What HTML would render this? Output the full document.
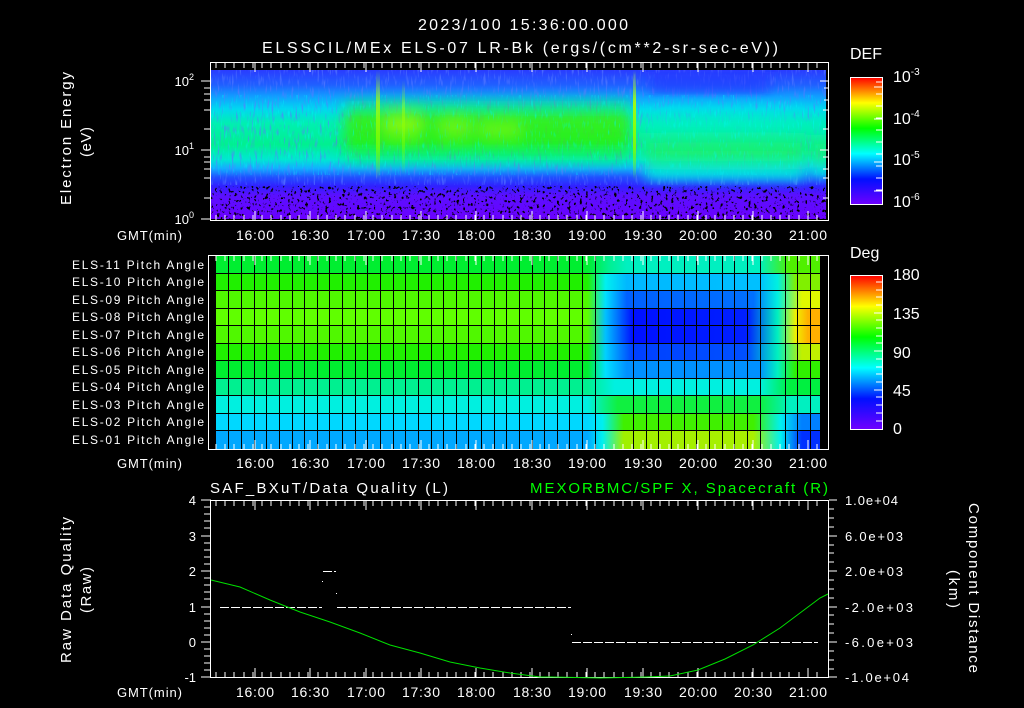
<!DOCTYPE html>
<html><head><meta charset="utf-8"><style>
html,body{margin:0;padding:0;background:#000;}
svg{display:block;}
text{font-family:"Liberation Sans",sans-serif;fill:#fff;}
</style></head><body>
<svg width="1024" height="708" viewBox="0 0 1024 708" xmlns="http://www.w3.org/2000/svg">
<defs>
<linearGradient id="rb" x1="0" y1="1" x2="0" y2="0">
<stop offset="0" stop-color="#7000ff"/><stop offset="0.2" stop-color="#0010ff"/><stop offset="0.4" stop-color="#00ffff"/><stop offset="0.6" stop-color="#00ff00"/><stop offset="0.8" stop-color="#ffff00"/><stop offset="1" stop-color="#ff0000"/>
</linearGradient>
<linearGradient id="sp" x1="0" y1="0" x2="0" y2="1">
<stop offset="0" stop-color="#2a3cff"/><stop offset="0.1" stop-color="#2060ff"/><stop offset="0.18" stop-color="#10a0ff"/><stop offset="0.26" stop-color="#00d8f0"/><stop offset="0.36" stop-color="#00f0b0"/><stop offset="0.5" stop-color="#00f090"/><stop offset="0.6" stop-color="#00e8d0"/><stop offset="0.66" stop-color="#10b0ff"/><stop offset="0.72" stop-color="#2050ff"/><stop offset="0.78" stop-color="#3020ff"/><stop offset="0.84" stop-color="#5a10ff"/><stop offset="1" stop-color="#6a00ff"/>
</linearGradient>
<linearGradient id="gb" x1="0" y1="0" x2="0" y2="1">
<stop offset="0" stop-color="#00ff40" stop-opacity="0"/><stop offset="0.35" stop-color="#40f000" stop-opacity="0.8"/><stop offset="0.6" stop-color="#30f000" stop-opacity="0.8"/><stop offset="1" stop-color="#00ff40" stop-opacity="0"/>
</linearGradient>
<linearGradient id="yb" x1="0" y1="0" x2="0" y2="1">
<stop offset="0" stop-color="#a0ff00" stop-opacity="0"/><stop offset="0.5" stop-color="#c8ff00" stop-opacity="0.9"/><stop offset="1" stop-color="#a0ff00" stop-opacity="0"/>
</linearGradient>
<linearGradient id="lb" x1="0" y1="0" x2="0" y2="1">
<stop offset="0" stop-color="#00e0f0" stop-opacity="0"/><stop offset="0.3" stop-color="#00f0c0" stop-opacity="0.9"/><stop offset="0.6" stop-color="#20f060" stop-opacity="0.8"/><stop offset="0.85" stop-color="#00f0e0" stop-opacity="0.8"/><stop offset="1" stop-color="#00e0f0" stop-opacity="0"/>
</linearGradient>
<linearGradient id="spk1" x1="0" y1="0" x2="0" y2="1">
<stop offset="0" stop-color="#b0ff00" stop-opacity="0"/><stop offset="0.3" stop-color="#b0ff00" stop-opacity="0.9"/><stop offset="0.7" stop-color="#80ff00" stop-opacity="0.9"/><stop offset="1" stop-color="#80ff00" stop-opacity="0"/>
</linearGradient>
<filter id="bl" x="-10%" y="-20%" width="120%" height="140%"><feGaussianBlur stdDeviation="7 3"/></filter>
<filter id="spk" x="0" y="0" width="100%" height="100%">
<feTurbulence type="fractalNoise" baseFrequency="0.35 0.3" numOctaves="2" seed="4"/>
<feColorMatrix type="matrix" values="0 0 0 0 0  0 0 0 0 0  0 0 0 0 0  10 0 0 0 -6"/>
</filter>
<filter id="tex" x="0" y="0" width="100%" height="100%">
<feTurbulence type="fractalNoise" baseFrequency="0.5 0.08" numOctaves="2" seed="7"/>
<feColorMatrix type="matrix" values="0 0 0 0 0.1  0 0 0 0 0.2  0 0 0 0 1  4 0 0 0 -2.2"/>
</filter>
<filter id="tex2" x="0" y="0" width="100%" height="100%">
<feTurbulence type="fractalNoise" baseFrequency="0.6 0.1" numOctaves="2" seed="11"/>
<feColorMatrix type="matrix" values="0 0 0 0 0  0 0 0 0 0.95  0 0 0 0 0.95  4 0 0 0 -2.4"/>
</filter>
<linearGradient id="r0" x1="216" x2="820" gradientUnits="userSpaceOnUse"><stop offset="0.615" stop-color="#00ee30"/><stop offset="0.65" stop-color="#00f090"/><stop offset="0.68" stop-color="#00f0c0"/><stop offset="0.9" stop-color="#00f0c0"/><stop offset="0.95" stop-color="#50f000"/></linearGradient>
<linearGradient id="r1" x1="216" x2="820" gradientUnits="userSpaceOnUse"><stop offset="0.615" stop-color="#20f000"/><stop offset="0.645" stop-color="#00f0f0"/><stop offset="0.68" stop-color="#00b8ff"/><stop offset="0.9" stop-color="#00c0ff"/><stop offset="0.93" stop-color="#00f0e0"/><stop offset="0.96" stop-color="#80f000"/></linearGradient>
<linearGradient id="r2" x1="216" x2="820" gradientUnits="userSpaceOnUse"><stop offset="0.615" stop-color="#50f800"/><stop offset="0.645" stop-color="#00e0ff"/><stop offset="0.68" stop-color="#0060ff"/><stop offset="0.89" stop-color="#0070ff"/><stop offset="0.93" stop-color="#00f0e0"/><stop offset="0.97" stop-color="#e0f800"/></linearGradient>
<linearGradient id="r3" x1="216" x2="820" gradientUnits="userSpaceOnUse"><stop offset="0.615" stop-color="#60ff00"/><stop offset="0.645" stop-color="#00c0ff"/><stop offset="0.69" stop-color="#0010ff"/><stop offset="0.88" stop-color="#0020ff"/><stop offset="0.93" stop-color="#00f0c0"/><stop offset="0.96" stop-color="#f0f000"/><stop offset="0.98" stop-color="#ffb000"/></linearGradient>
<linearGradient id="r4" x1="216" x2="820" gradientUnits="userSpaceOnUse"><stop offset="0.615" stop-color="#50f800"/><stop offset="0.645" stop-color="#00c0ff"/><stop offset="0.69" stop-color="#0010ff"/><stop offset="0.88" stop-color="#0020ff"/><stop offset="0.93" stop-color="#00f0c0"/><stop offset="0.96" stop-color="#f0f000"/><stop offset="0.98" stop-color="#ffb000"/></linearGradient>
<linearGradient id="r5" x1="216" x2="820" gradientUnits="userSpaceOnUse"><stop offset="0.615" stop-color="#20f000"/><stop offset="0.645" stop-color="#00d0ff"/><stop offset="0.69" stop-color="#0040ff"/><stop offset="0.88" stop-color="#0050ff"/><stop offset="0.93" stop-color="#00f0c0"/><stop offset="0.97" stop-color="#c0f000"/></linearGradient>
<linearGradient id="r6" x1="216" x2="820" gradientUnits="userSpaceOnUse"><stop offset="0.615" stop-color="#00ee30"/><stop offset="0.645" stop-color="#00e0ff"/><stop offset="0.68" stop-color="#0090ff"/><stop offset="0.9" stop-color="#0090ff"/><stop offset="0.93" stop-color="#00f0c0"/><stop offset="0.96" stop-color="#30f000"/></linearGradient>
<linearGradient id="r7" x1="216" x2="820" gradientUnits="userSpaceOnUse"><stop offset="0.615" stop-color="#00f090"/><stop offset="0.66" stop-color="#00f0e0"/><stop offset="0.9" stop-color="#00f0e0"/><stop offset="0.95" stop-color="#00f040"/></linearGradient>
<linearGradient id="r8" x1="216" x2="820" gradientUnits="userSpaceOnUse"><stop offset="0.615" stop-color="#00f0e0"/><stop offset="0.665" stop-color="#10f040"/><stop offset="0.9" stop-color="#10f040"/><stop offset="0.95" stop-color="#00f0c0"/></linearGradient>
<linearGradient id="r9" x1="216" x2="820" gradientUnits="userSpaceOnUse"><stop offset="0.615" stop-color="#00d8ff"/><stop offset="0.64" stop-color="#00f0f0"/><stop offset="0.675" stop-color="#40f000"/><stop offset="0.89" stop-color="#40f000"/><stop offset="0.935" stop-color="#00f0f0"/><stop offset="0.97" stop-color="#0080ff"/></linearGradient>
<linearGradient id="r10" x1="216" x2="820" gradientUnits="userSpaceOnUse"><stop offset="0.615" stop-color="#00a8ff"/><stop offset="0.64" stop-color="#00f0f0"/><stop offset="0.675" stop-color="#a0f000"/><stop offset="0.89" stop-color="#a8f000"/><stop offset="0.935" stop-color="#00f0f0"/><stop offset="0.97" stop-color="#0030ff"/></linearGradient>
<clipPath id="c1"><rect x="211" y="70" width="615" height="149"/></clipPath>
</defs>

<!-- titles -->
<text x="418" y="30" font-size="16" textLength="210" lengthAdjust="spacing">2023/100 15:36:00.000</text>
<text x="262" y="53" font-size="16" textLength="516" lengthAdjust="spacing">ELSSCIL/MEx ELS-07 LR-Bk  (ergs/(cm**2-sr-sec-eV))</text>

<!-- ===== TOP SPECTROGRAM ===== -->
<rect x="211" y="70" width="615" height="149" fill="url(#sp)"/>
<rect x="211" y="70" width="615" height="115" filter="url(#tex)" opacity="0.7"/>
<g clip-path="url(#c1)">
<g filter="url(#bl)">
<rect x="345" y="92" width="285" height="80" fill="url(#gb)"/>
<rect x="385" y="100" width="35" height="50" fill="url(#yb)" opacity="0.6"/>
<rect x="440" y="105" width="30" height="45" fill="url(#yb)" opacity="0.4"/>
<rect x="480" y="110" width="40" height="40" fill="url(#yb)" opacity="0.35"/>
<rect x="645" y="100" width="160" height="88" fill="url(#lb)"/>
<rect x="650" y="72" width="120" height="22" fill="#2030ff" opacity="0.5"/>
<rect x="812" y="105" width="20" height="80" fill="url(#lb)"/>
</g>
</g>
<rect x="211" y="95" width="615" height="80" filter="url(#tex2)" opacity="0.45"/>
<rect x="376" y="70" width="4" height="110" fill="url(#spk1)" opacity="0.8"/>
<rect x="402" y="80" width="3" height="95" fill="url(#spk1)" opacity="0.5"/>
<rect x="633" y="70" width="3" height="110" fill="url(#spk1)"/>
<rect x="211" y="186" width="615" height="33" fill="#000" filter="url(#spk)"/>
<!-- frame -->
<rect x="210.5" y="62.5" width="618" height="158" fill="none" stroke="#fff"/>
<g stroke="#fff" id="tt">
<path d="M216 63v5M225 63v5M234 63v5M244 63v5M253 63v5M262 63v5M271 63v5M281 63v5M290 63v5M299 63v5M308 63v5M318 63v5M327 63v5M336 63v5M345 63v5M355 63v5M364 63v5M373 63v5M382 63v5M392 63v5M401 63v5M410 63v5M419 63v5M429 63v5M438 63v5M447 63v5M456 63v5M466 63v5M475 63v5M484 63v5M493 63v5M503 63v5M512 63v5M521 63v5M530 63v5M540 63v5M549 63v5M558 63v5M567 63v5M577 63v5M586 63v5M595 63v5M604 63v5M614 63v5M623 63v5M632 63v5M641 63v5M651 63v5M660 63v5M669 63v5M678 63v5M688 63v5M697 63v5M706 63v5M715 63v5M725 63v5M734 63v5M743 63v5M752 63v5M762 63v5M771 63v5M780 63v5M789 63v5M799 63v5M808 63v5M817 63v5"/>
<path d="M255 63v9M310 63v9M366 63v9M421 63v9M476 63v9M532 63v9M587 63v9M643 63v9M698 63v9M753 63v9M808 63v9"/>
</g>
<use href="#tt" transform="matrix(1 0 0 -1 0 283)"/>
<g stroke="#fff">
<path d="M201 81h9M201 150h9M201 219h9M204 88h6M204 94h6M204 100h6M204 110h6M204 129h6M204 157h6M204 162h6M204 169h6M204 178h6M204 198h6"/>
<path d="M829 81h-9M829 150h-9M829 110h-6M829 129h-6M829 157h-6M829 169h-6M829 178h-6M829 198h-6M829 88h-5M829 100h-5"/>
</g>
<text x="194" y="86" font-size="13" text-anchor="end">10<tspan font-size="9" dy="-6">2</tspan></text>
<text x="194" y="155" font-size="13" text-anchor="end">10<tspan font-size="9" dy="-6">1</tspan></text>
<text x="194" y="224" font-size="13" text-anchor="end">10<tspan font-size="9" dy="-6">0</tspan></text>
<text transform="translate(71,205) rotate(-90)" font-size="15" textLength="133" lengthAdjust="spacing">Electron Energy</text>
<text transform="translate(91,157) rotate(-90)" font-size="15" textLength="30" lengthAdjust="spacing">(eV)</text>
<g font-size="14" id="tl">
<text x="236" y="240" textLength="38">16:00</text><text x="291" y="240" textLength="38">16:30</text><text x="347" y="240" textLength="38">17:00</text><text x="402" y="240" textLength="38">17:30</text><text x="457" y="240" textLength="38">18:00</text><text x="513" y="240" textLength="38">18:30</text><text x="568" y="240" textLength="38">19:00</text><text x="624" y="240" textLength="38">19:30</text><text x="679" y="240" textLength="38">20:00</text><text x="734" y="240" textLength="38">20:30</text><text x="789" y="240" textLength="38">21:00</text>
</g>
<text x="117" y="240" font-size="13" textLength="65" lengthAdjust="spacing">GMT(min)</text>
<!-- DEF colorbar -->
<text x="850" y="59" font-size="16">DEF</text>
<rect x="850.5" y="77.5" width="32" height="127" fill="url(#rb)" stroke="#fff"/>
<g stroke="#fff"><path d="M876 82h6M876 94h6M876 106h6M876 118h6M876 130h6M876 142h6M876 154h6M876 166h6M876 178h6M876 190h6M874 87h8M874 119h8M874 162h8M874 191h8"/></g>
<text x="893" y="82" font-size="16">10<tspan font-size="10" dy="-7">-3</tspan></text>
<text x="893" y="124" font-size="16">10<tspan font-size="10" dy="-7">-4</tspan></text>
<text x="893" y="165" font-size="16">10<tspan font-size="10" dy="-7">-5</tspan></text>
<text x="893" y="207" font-size="16">10<tspan font-size="10" dy="-7">-6</tspan></text>

<!-- ===== PITCH ANGLE PANEL ===== -->
<rect x="216" y="256" width="604" height="18" fill="url(#r0)"/>
<rect x="216" y="273" width="604" height="18" fill="url(#r1)"/>
<rect x="216" y="290" width="604" height="19" fill="url(#r2)"/>
<rect x="216" y="308" width="604" height="18" fill="url(#r3)"/>
<rect x="216" y="325" width="604" height="19" fill="url(#r4)"/>
<rect x="216" y="343" width="604" height="18" fill="url(#r5)"/>
<rect x="216" y="360" width="604" height="19" fill="url(#r6)"/>
<rect x="216" y="378" width="604" height="18" fill="url(#r7)"/>
<rect x="216" y="395" width="604" height="19" fill="url(#r8)"/>
<rect x="216" y="413" width="604" height="18" fill="url(#r9)"/>
<rect x="216" y="430" width="604" height="19" fill="url(#r10)"/>
<g stroke="#000" stroke-width="1">
<path d="M216 273.5h604M216 290.5h604M216 308.5h604M216 325.5h604M216 343.5h604M216 360.5h604M216 378.5h604M216 395.5h604M216 413.5h604M216 430.5h604"/>
<path d="M228.5 256v193M241.5 256v193M254.5 256v193M266.5 256v193M279.5 256v193M292.5 256v193M304.5 256v193M317.5 256v193M329.5 256v193M342.5 256v193M355.5 256v193M367.5 256v193M380.5 256v193M393.5 256v193M405.5 256v193M418.5 256v193M431.5 256v193M443.5 256v193M456.5 256v193M468.5 256v193M481.5 256v193M494.5 256v193M506.5 256v193M519.5 256v193M532.5 256v193M544.5 256v193M557.5 256v193M569.5 256v193M582.5 256v193M595.5 256v193M633.5 256v193M646.5 256v193M658.5 256v193M671.5 256v193M684.5 256v193M696.5 256v193M709.5 256v193M722.5 256v193M734.5 256v193M747.5 256v193M760.5 256v193M785.5 256v193M797.5 256v193M810.5 256v193"/>
</g>
<rect x="208.5" y="255.5" width="620" height="194" fill="none" stroke="#fff"/>
<use href="#tt" transform="translate(0,193)"/>
<use href="#tt" transform="matrix(1 0 0 -1 0 512)"/>
<g font-size="12">
<text x="72" y="269" textLength="132" lengthAdjust="spacing">ELS-11 Pitch Angle</text><text x="72" y="286" textLength="132" lengthAdjust="spacing">ELS-10 Pitch Angle</text><text x="72" y="304" textLength="132" lengthAdjust="spacing">ELS-09 Pitch Angle</text><text x="72" y="321" textLength="132" lengthAdjust="spacing">ELS-08 Pitch Angle</text><text x="72" y="339" textLength="132" lengthAdjust="spacing">ELS-07 Pitch Angle</text><text x="72" y="356" textLength="132" lengthAdjust="spacing">ELS-06 Pitch Angle</text><text x="72" y="374" textLength="132" lengthAdjust="spacing">ELS-05 Pitch Angle</text><text x="72" y="391" textLength="132" lengthAdjust="spacing">ELS-04 Pitch Angle</text><text x="72" y="409" textLength="132" lengthAdjust="spacing">ELS-03 Pitch Angle</text><text x="72" y="426" textLength="132" lengthAdjust="spacing">ELS-02 Pitch Angle</text><text x="72" y="444" textLength="132" lengthAdjust="spacing">ELS-01 Pitch Angle</text>
</g>
<use href="#tl" transform="translate(0,228)"/>
<text x="117" y="468" font-size="13" textLength="65" lengthAdjust="spacing">GMT(min)</text>
<!-- Deg colorbar -->
<text x="850" y="258" font-size="16">Deg</text>
<rect x="850.5" y="275.5" width="32" height="154" fill="url(#rb)" stroke="#fff"/>
<g stroke="#fff"><path d="M876 282h6M876 290h6M876 297h6M876 305h6M876 320h6M876 328h6M876 336h6M876 343h6M876 359h6M876 367h6M876 374h6M876 382h6M876 397h6M876 405h6M876 413h6M876 421h6M874 313h8M874 351h8M874 390h8"/></g>
<g font-size="16"><text x="893" y="280">180</text><text x="893" y="319">135</text><text x="893" y="358">90</text><text x="893" y="396">45</text><text x="893" y="434">0</text></g>

<!-- ===== BOTTOM PANEL ===== -->
<text x="210" y="493" font-size="15" textLength="238" lengthAdjust="spacing">SAF_BXuT/Data Quality (L)</text>
<text x="530" y="493" font-size="15" textLength="298" lengthAdjust="spacing" style="fill:#00ff00">MEXORBMC/SPF X, Spacecraft (R)</text>
<rect x="210.5" y="500.5" width="618" height="177" fill="none" stroke="#fff"/>
<use href="#tt" transform="translate(0,438)"/>
<use href="#tt" transform="matrix(1 0 0 -1 0 740)"/>
<g stroke="#fff">
<path d="M201 500h10M201 536h10M201 571h10M201 607h10M201 642h10M201 677h10M204 507h6M204 514h6M204 521h6M204 528h6M204 543h6M204 550h6M204 557h6M204 564h6M204 578h6M204 585h6M204 592h6M204 599h6M204 614h6M204 621h6M204 628h6M204 635h6M204 649h6M204 656h6M204 663h6M204 670h6"/>
<path d="M829 500h8M829 536h8M829 571h8M829 607h8M829 642h8M829 677h8M829 509h5M829 518h5M829 527h5M829 545h5M829 553h5M829 562h5M829 580h5M829 589h5M829 598h5M829 615h5M829 624h5M829 633h5M829 651h5M829 660h5M829 669h5"/>
</g>
<g font-size="13" text-anchor="end"><text x="196" y="505">4</text><text x="196" y="541">3</text><text x="196" y="576">2</text><text x="196" y="612">1</text><text x="196" y="647">0</text><text x="196" y="682">-1</text></g>
<g font-size="13"><text x="845" y="505" textLength="53">1.0e+04</text><text x="845" y="541" textLength="58">6.0e+03</text><text x="845" y="576" textLength="58">2.0e+03</text><text x="845" y="612" textLength="68">-2.0e+03</text><text x="845" y="647" textLength="68">-6.0e+03</text><text x="845" y="682" textLength="64">-1.0e+04</text></g>
<text transform="translate(71,663) rotate(-90)" font-size="15" textLength="146" lengthAdjust="spacing">Raw Data Quality</text>
<text transform="translate(91,613) rotate(-90)" font-size="15" textLength="46" lengthAdjust="spacing">(Raw)</text>
<text transform="translate(969,503) rotate(90)" font-size="15" textLength="170" lengthAdjust="spacing">Component Distance</text>
<text transform="translate(949,570) rotate(90)" font-size="15" textLength="38" lengthAdjust="spacing">(km)</text>
<g stroke="#fff" stroke-width="1" stroke-dasharray="9 2" fill="none">
<path d="M220 607.5h102M337 607.5h234M572 642.5h246M323 571.5h13"/>
</g>
<rect x="322" y="581" width="1" height="1" fill="#fff"/><rect x="336" y="593" width="1" height="1" fill="#fff"/><rect x="571" y="634" width="1" height="1" fill="#fff"/>
<polyline fill="none" stroke="#00e000" stroke-width="1" points="211,580 240,587 270,600 300,612 330,622 360,633 390,645 420,653 450,662 480,668 510,673 540,677 552,677 600,678 645,677 670,676 698,670 725,659 753,645 780,628 808,607 820,598 828,594"/>
<use href="#tl" transform="translate(0,457)"/>
<text x="117" y="697" font-size="13" textLength="65" lengthAdjust="spacing">GMT(min)</text>
</svg>
</body></html>
